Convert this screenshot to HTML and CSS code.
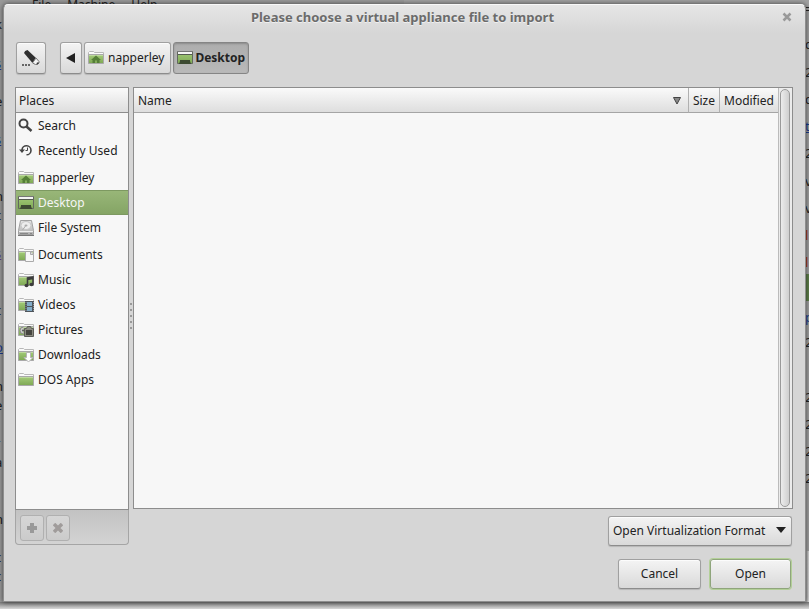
FILE: index.html
```
<!DOCTYPE html>
<html lang="en">
<head>
    <meta charset="UTF-8">
    <meta name="viewport" content="width=device-width, initial-scale=1.0">
    <title>Please choose a virtual appliance file to import</title>
    <link rel="stylesheet" href="styles.css">
</head>
<body>
    <!-- shared icon shapes -->
    <svg class="defs" aria-hidden="true">
        <defs>
            <linearGradient id="green" x1="0" y1="0" x2="0" y2="1">
                <stop offset="0" stop-color="#a3cb78"/>
                <stop offset="1" stop-color="#7fa956"/>
            </linearGradient>
            <linearGradient id="silver" x1="0" y1="0" x2="0" y2="1">
                <stop offset="0" stop-color="#e4e4e4"/>
                <stop offset="1" stop-color="#b0b0b0"/>
            </linearGradient>
            <symbol id="folder" viewBox="0 0 16 16">
                <path d="M.5 13.500V2.500L1.500 1.500h4l1 1h9v11z" fill="#fafafa" stroke="#b8b8b8"/>
                <path d="M.5 4.500h15v9H.5z" fill="#e8e8e8" stroke="#a9a9a9"/>
                <path d="M1 5h14v8H1z" fill="url(#green)"/>
                <path d="M1 5.500h14" stroke="#bcd99c"/>
            </symbol>
            <symbol id="home" viewBox="0 0 16 16">
                <use href="#folder"/>
                <path d="M8 5.500l5 4.500h-1.500v3H9v-2.500H7V13H4.500v-3H3z" fill="#557f38"/>
            </symbol>
            <symbol id="desktop" viewBox="0 0 16 16">
                <path d="M.5 1.500h15v12H.5z" fill="url(#green)" stroke="#62685d"/>
                <path d="M0 1h16v1H0z" fill="#777"/>
                <path d="M1 2h14v2H1z" fill="#f4f4f4"/>
                <path d="M1 4.500h14" stroke="#555b50"/>
                <path d="M3 10h10v1l1 3H2l1-3z" fill="#3d4a32"/>
            </symbol>
        </defs>
    </svg>

    <!-- windows showing behind the dialog -->
    <div class="backdrop" aria-hidden="true">
        <div class="backdrop-menu"><span>File</span><span>Machine</span><span>Help</span></div>
        <div class="backdrop-corner"></div>
        <div class="backdrop-green"></div>
        <span class="bit left" style="top: 15px">k</span>
        <span class="bit left link" style="top: 54px">s</span>
        <span class="bit left" style="top: 92px">e</span>
        <span class="bit left link" style="top: 130px">s</span>
        <span class="bit left" style="top: 168px">l</span>
        <span class="bit left" style="top: 187px">n</span>
        <span class="bit left" style="top: 206px">c</span>
        <span class="bit left visited" style="top: 244px">s</span>
        <span class="bit left" style="top: 301px">c</span>
        <span class="bit left link" style="top: 338px">o</span>
        <span class="bit left" style="top: 377px">h</span>
        <span class="bit left" style="top: 396px">e</span>
        <span class="bit left" style="top: 434px">r</span>
        <span class="bit left" style="top: 453px">a</span>
        <span class="bit left" style="top: 491px">l</span>
        <span class="bit left" style="top: 510px">n</span>
        <span class="bit left" style="top: 548px">c</span>
        <span class="bit left" style="top: 567px">c</span>
        <span class="bit right" style="top: 0px">=</span>
        <span class="bit right" style="top: 35px">c</span>
        <span class="bit right" style="top: 63px">2</span>
        <span class="bit right" style="top: 90px">c</span>
        <span class="bit right link" style="top: 117px">t</span>
        <span class="bit right" style="top: 144px">2</span>
        <span class="bit right" style="top: 172px">v</span>
        <span class="bit right" style="top: 199px">v</span>
        <span class="bit right red" style="top: 226px">l</span>
        <span class="bit right red" style="top: 253px">l</span>
        <span class="bit right link" style="top: 308px">p</span>
        <span class="bit right" style="top: 333px">2</span>
        <span class="bit right" style="top: 388px">2</span>
        <span class="bit right" style="top: 415px">2</span>
        <span class="bit right" style="top: 442px">2</span>
        <span class="bit right" style="top: 469px">2</span>
    </div>

    <main class="dialog">
        <header class="titlebar">
            <h1>Please choose a virtual appliance file to import</h1>
            <button class="close" type="button" aria-label="Close">
                <svg width="10" height="10" viewBox="0 0 10 10"><path d="M1.500 1.500l7 7m0-7l-7 7" stroke="#999" stroke-width="2.500"/></svg>
            </button>
        </header>

        <nav class="pathbar">
            <button class="btn btn-edit" type="button" aria-label="Type a file name">
                <svg width="18" height="18" viewBox="0 0 18 18">
                    <path d="M2 4Q2.500 1.500 5.500 1l8.500 8-3.500 5z" fill="#303030"/>
                    <path d="M14 9l3 3.500v1.500l-1.500 1.500h-2l-3-1.500z" fill="#f4f4f4" stroke="#777"/>
                    <path d="M14.500 14l2-1v1.500l-1.500 1z" fill="#333"/>
                    <path d="M0 15h2v2H0zm3 0h2v2H3zm3 0h2v2H6z" fill="#666"/>
                </svg>
            </button>
            <button class="btn btn-back" type="button" aria-label="Back">
                <svg width="10" height="10" viewBox="0 0 10 10"><path d="M0 5l9-5v10z" fill="#222"/></svg>
            </button>
            <button class="btn btn-path" type="button"><svg width="16" height="16"><use href="#home"/></svg>napperley</button>
            <button class="btn btn-path active" type="button"><svg width="16" height="16"><use href="#desktop"/></svg>Desktop</button>
        </nav>

        <div class="panes">
            <aside class="places">
                <h2 class="places-head">Places</h2>
                <ul class="places-list">
                    <li><a href="#">
                        <svg width="16" height="16" viewBox="0 0 16 16"><circle cx="5.500" cy="5.500" r="4" fill="none" stroke="#444" stroke-width="2"/><path d="M8.500 8.500l5 4.500" stroke="#444" stroke-width="2.500"/></svg>Search</a></li>
                    <li><a href="#">
                        <svg width="16" height="16" viewBox="0 0 16 16"><path d="M4 7a4.500 4.500 0 1 1 4.500 4.800" fill="none" stroke="#444" stroke-width="1.600"/><path d="M1 6.500h6L4 10z" fill="#444"/><path d="M9.500 4.500v3H7.500" fill="none" stroke="#444"/></svg>Recently Used</a></li>
                    <li class="group"><a href="#"><svg width="16" height="16"><use href="#home"/></svg>napperley</a></li>
                    <li class="selected"><a href="#"><svg width="16" height="16"><use href="#desktop"/></svg>Desktop</a></li>
                    <li><a href="#">
                        <svg width="16" height="16" viewBox="0 0 16 16"><path d="M2.500 .5h11l2 10v4H.5v-4z" fill="url(#silver)" stroke="#a0a0a0"/><ellipse cx="8" cy="5.500" rx="5" ry="4" fill="#ededed" stroke="#c6c6c6"/><ellipse cx="8" cy="5.500" rx="1.500" ry="1" fill="#aaa"/><path d="M7.500 6l-3 4" stroke="#aaa"/><path d="M1 11.500h14" stroke="#eee"/><path d="M2 13.500h8M12 13.500h2" stroke="#888"/><path d="M0 15h16v1H0z" fill="#777"/></svg>File System</a></li>
                    <li class="group"><a href="#">
                        <svg width="16" height="16" viewBox="0 0 16 16"><use href="#folder"/><path d="M7.500 4.500h5l3 3v7h-8z" fill="#f7f7f7" stroke="#aaa"/><path d="M12.500 4.500v3h3" fill="#ddd" stroke="#aaa"/></svg>Documents</a></li>
                    <li><a href="#">
                        <svg width="16" height="16" viewBox="0 0 16 16"><use href="#folder"/><path d="M9.500 13.500V6l5.500-1v7.500M9.500 7.500l5.500-1" fill="none" stroke="#3c3c3c" stroke-width="1.600"/><ellipse cx="8.500" cy="13.500" rx="2" ry="1.700" fill="#3c3c3c"/><ellipse cx="13.500" cy="12.500" rx="2" ry="1.700" fill="#3c3c3c"/></svg>Music</a></li>
                    <li><a href="#">
                        <svg width="16" height="16" viewBox="0 0 16 16"><use href="#folder"/><path d="M7 4h9v11H7z" fill="#4d545b"/><path d="M9 5h5v4H9zm0 5h5v4H9z" fill="#83acc8"/><path d="M8 5v9M15.500 5v9" stroke="#999" stroke-dasharray="1 1"/></svg>Videos</a></li>
                    <li><a href="#">
                        <svg width="16" height="16" viewBox="0 0 16 16"><use href="#folder"/><path d="M6.500 6.500h2l1-2h3l1 2h2v8h-9z" fill="#8a8a80" stroke="#5c5c58"/><path d="M8 8h6v5H8z" fill="#45453f"/><path d="M5.500 5a3.500 3.500 0 0 0 0 7" fill="#ccc" stroke="#888"/><circle cx="5" cy="8.500" r="1" fill="#555"/></svg>Pictures</a></li>
                    <li><a href="#">
                        <svg width="16" height="16" viewBox="0 0 16 16"><use href="#folder"/><path d="M8.500 5.500h4v5H15l-4.500 4.500-4.500-4.500h2.500z" fill="#fff" stroke="#b5b5b5"/></svg>Downloads</a></li>
                    <li><a href="#"><svg width="16" height="16"><use href="#folder"/></svg>DOS Apps</a></li>
                </ul>
                <div class="places-tools">
                    <button class="tool" type="button" disabled aria-label="Add bookmark">
                        <svg width="10" height="10" viewBox="0 0 10 10"><path d="M5 0v10M0 5h10" stroke="#999" stroke-width="4"/></svg>
                    </button>
                    <button class="tool" type="button" disabled aria-label="Remove bookmark">
                        <svg width="10" height="10" viewBox="0 0 10 10"><path d="M1 1l8 8m0-8L1 9" stroke="#a09c9b" stroke-width="3.500"/></svg>
                    </button>
                </div>
            </aside>

            <div class="splitter"><i></i><i></i><i></i><i></i><i></i></div>

            <section class="files">
                <div class="files-view">
                    <table class="files-table">
                        <thead>
                            <tr>
                                <th class="col-name"><span>Name<svg width="8" height="8" viewBox="0 0 8 8"><path d="M.5 .5h7L4 7z" fill="#888" stroke="#444"/></svg></span></th>
                                <th class="col-size">Size</th>
                                <th class="col-modified">Modified</th>
                            </tr>
                        </thead>
                        <tbody></tbody>
                    </table>
                </div>
                <div class="scrollbar"><div class="thumb"></div></div>
            </section>
        </div>

        <div class="filter">
            <select class="btn" aria-label="File type">
                <option>Open Virtualization Format</option>
            </select>
            <svg class="filter-arrow" width="10" height="6" viewBox="0 0 10 6"><path d="M0 0h10L5 6z" fill="#222"/></svg>
        </div>

        <footer class="actions">
            <button class="btn" type="button">Cancel</button>
            <button class="btn default" type="button">Open</button>
        </footer>
    </main>
</body>
</html>
```
FILE: styles.css
```
* {
    box-sizing: border-box;
}
body {
    margin: 0;
    padding: 4px 3px 7px;
    min-height: 100vh;
    display: flex;
    background: #999;
    font: 12px/16px "Noto Sans", "Open Sans", sans-serif;
    color: #222;
    overflow: hidden;
}
button, select {
    font: inherit;
    color: inherit;
}
svg {
    display: block;
    flex: none;
}
.defs {
    position: absolute;
    width: 0;
    height: 0;
}

/* background windows */
.backdrop {
    position: absolute;
    inset: 0;
    overflow: hidden;
    background: linear-gradient(to right, #999 50%, #a0a0a0 50%);
}
.backdrop::after {
    content: "";
    position: absolute;
    left: 0;
    right: 0;
    bottom: 0;
    height: 7px;
    background: linear-gradient(#777, #d8d8d8);
}
.backdrop-menu {
    position: absolute;
    top: -3px;
    left: 32px;
    display: flex;
    gap: 16px;
    line-height: 16px;
}
.backdrop-corner {
    position: absolute;
    right: 0;
    bottom: 0;
    width: 4px;
    height: 58px;
    background: linear-gradient(to right, #888, #ddd);
}
.backdrop-green {
    position: absolute;
    right: 0;
    top: 274px;
    width: 4px;
    height: 27px;
    background: #5f7f4b;
}
.bit {
    position: absolute;
    width: 8px;
    font-size: 13px;
    line-height: 18px;
}
.left {
    left: -5px;
}
.right {
    left: 805px;
}
.link {
    color: #1a3a8c;
    text-decoration: underline;
}
.visited {
    color: #5b3c87;
    text-decoration: underline;
}
.red {
    color: #a03010;
}

/* dialog */
.dialog {
    position: relative;
    flex: 1;
    display: flex;
    flex-direction: column;
    padding: 0 12px 12px 11px;
    border: 1px solid #8e8e8e;
    border-top-color: #f8f8f8;
    border-radius: 5px 5px 0 0;
    background: #d6d6d6 linear-gradient(#e6e6e6, #d6d6d6) no-repeat 0 0 / 100% 28px;
    box-shadow: 0 0 5px rgba(0, 0, 0, 0.6);
}
.titlebar {
    display: flex;
    align-items: center;
    height: 24px;
    padding-right: 1px;
}
.titlebar h1 {
    flex: 1;
    margin: 0;
    padding-left: 8px;
    font-size: 13px;
    font-weight: bold;
    text-align: center;
    color: #6b6b6b;
    text-shadow: 0 1px #f0f0f0;
}
.close {
    padding: 0;
    border: 0;
    background: none;
}

.btn {
    display: flex;
    align-items: center;
    justify-content: center;
    height: 30px;
    padding: 0 4px;
    border: 1px solid #a0a0a0;
    border-bottom-color: #8c8c8c;
    border-radius: 3px;
    background: linear-gradient(#f4f4f4, #d9d9d9);
    box-shadow: inset 0 1px #fcfcfc, 0 1px 1px rgba(0, 0, 0, 0.15);
}
.pathbar {
    display: flex;
    gap: 2px;
    padding: 13px 1px;
}
.pathbar .btn {
    height: 32px;
}
.btn-edit {
    width: 30px;
    margin-right: 12px;
}
.btn-back {
    width: 22px;
}
.btn-path {
    gap: 4px;
    padding: 0 6px 0 3px;
}
.btn-path.active {
    padding: 0 3px;
    gap: 2px;
    font-weight: bold;
    border-color: #858585;
    background: linear-gradient(#adadad, #b9b9b9);
    box-shadow: inset 0 1px 2px rgba(0, 0, 0, 0.2);
}

.panes {
    flex: 1;
    display: flex;
}
.places {
    width: 114px;
    display: flex;
    flex-direction: column;
}
.places-head {
    margin: 0;
    height: 26px;
    padding: 1px 3px 0;
    border: 1px solid #8d8d8d;
    background: linear-gradient(#fafafa, #dedede);
    font-size: 12px;
    font-weight: normal;
    line-height: 24px;
}
.places-list {
    flex: 1;
    margin: 0;
    padding: 0;
    list-style: none;
    border: 1px solid #8d8d8d;
    border-top: 0;
    background: #f7f7f7;
}
.places-list a {
    display: flex;
    align-items: center;
    gap: 4px;
    height: 25px;
    padding-left: 2px;
    color: inherit;
    text-decoration: none;
}
.places-list .group {
    margin-top: 2px;
}
.places-list .selected {
    color: #f5f5f5;
    background: linear-gradient(#99b779, #84a464);
    box-shadow: inset 0 1px #7d9961, inset 0 -1px #7d9961;
}
.places-tools {
    display: flex;
    gap: 2px;
    height: 35px;
    padding: 5px 4px;
    border: 1px solid #a5a5a5;
    border-top: 0;
    border-radius: 0 0 4px 4px;
    background: linear-gradient(#c2c2c2, #d3d3d3);
}
.tool {
    display: flex;
    align-items: center;
    justify-content: center;
    width: 24px;
    height: 26px;
    padding: 0;
    border: 1px solid #b0b0b0;
    border-radius: 3px;
    background: linear-gradient(#d6d6d6, #cbcbcb);
}
.splitter {
    width: 4px;
    display: flex;
    flex-direction: column;
    align-items: center;
    justify-content: center;
    gap: 4px;
}
.splitter i {
    width: 2px;
    height: 2px;
    background: #999;
}

.files {
    flex: 1;
    display: flex;
    margin-bottom: 36px;
    border: 1px solid #8d8d8d;
    background: #f7f7f7;
}
.files-view {
    flex: 1;
}
.files-table {
    width: 100%;
    border-collapse: separate;
    border-spacing: 0;
}
.files-table th {
    height: 25px;
    padding: 1px 4px 0;
    border-right: 1px solid #b0b0b0;
    border-bottom: 1px solid #a5a5a5;
    background: linear-gradient(#fafafa, #dedede);
    font-weight: normal;
    text-align: left;
}
.files-table .col-name {
    padding-right: 7px;
}
.col-name span {
    display: flex;
    align-items: center;
    justify-content: space-between;
}
.files-table .col-size {
    width: 31px;
}
.files-table .col-modified {
    width: 58px;
    border-right: 0;
}
.scrollbar {
    display: flex;
    width: 14px;
    padding: 1px 2px 1px 1px;
    border-left: 1px solid #bbb;
    background: #ececec;
}
.thumb {
    flex: 1;
    border: 1px solid #9a9a9a;
    border-radius: 5px;
    background: linear-gradient(to right, #ececec, #cfcfcf);
}

/* the filter row shares its height with the bookmark tools */
.filter {
    position: relative;
    align-self: flex-end;
    margin-top: -29px;
    padding-right: 1px;
}
.filter select {
    appearance: none;
    width: 184px;
}
.filter-arrow {
    position: absolute;
    right: 7px;
    top: 11px;
    pointer-events: none;
}
.actions {
    display: flex;
    justify-content: flex-end;
    gap: 9px;
    margin-top: 13px;
    padding-right: 2px;
}
.actions .btn {
    width: 83px;
}
.actions .default {
    width: 81px;
    border-color: #8fa57c;
    box-shadow: inset 0 1px #fcfcfc, 0 0 0 1px #b3cf98;
}
```
